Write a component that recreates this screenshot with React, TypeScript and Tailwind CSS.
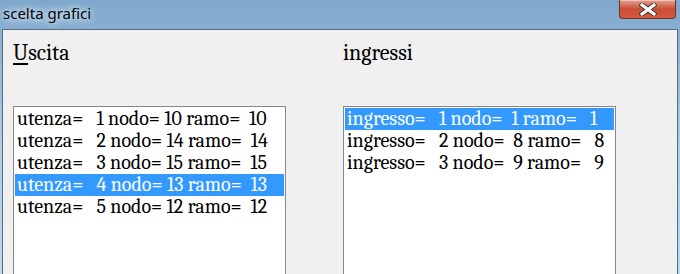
const uscite = [
  { n: 1, nodo: 10, ramo: 10 },
  { n: 2, nodo: 14, ramo: 14 },
  { n: 3, nodo: 15, ramo: 15 },
  { n: 4, nodo: 13, ramo: 13 },
  { n: 5, nodo: 12, ramo: 12 },
];

const ingressi = [
  { n: 1, nodo: 1, ramo: 1 },
  { n: 2, nodo: 8, ramo: 8 },
  { n: 3, nodo: 9, ramo: 9 },
];

function pad(v: number, w: number) {
  return String(v).padStart(w, " ");
}

function ListBox({ rows, selected }: { rows: string[]; selected: number }) {
  return (
    <div className="w-[273px] h-[200px] border border-[#828790] bg-white p-[1px]">
      {rows.map((r, i) => (
        <div
          key={i}
          className={`h-[22px] pl-[2px] leading-[22px] whitespace-pre text-[20px] font-serif ${
            i === selected ? "bg-[#3399ff] text-white" : "text-black"
          }`}
        >
          {r}
        </div>
      ))}
    </div>
  );
}

export default function App() {
  const left = uscite.map((u) => `utenza=${pad(u.n, 4)} nodo=${pad(u.nodo, 3)} ramo=${pad(u.ramo, 4)}`);
  const right = ingressi.map((u) => `ingresso=${pad(u.n, 4)} nodo=${pad(u.nodo, 3)} ramo=${pad(u.ramo, 4)}`);

  return (
    <div className="w-[680px] h-[274px] overflow-hidden flex flex-col bg-gradient-to-b from-[#7fa7cc] via-[#a8cdec] to-[#b8dbf4]">
      {/* title bar */}
      <div className="h-[29px] flex items-start justify-between shrink-0">
        <div className="pl-[3px] pt-[4px] text-[15px] leading-[18px] text-black font-sans [text-shadow:0_0_6px_#e6f3fd,0_0_10px_#e6f3fd]">
          scelta grafici
        </div>
        <div className="mr-[4px] w-[57px] h-[19px] rounded-b-[4px] border border-t-0 border-[#6e3028] bg-gradient-to-b from-[#e3a091] via-[#c94d35] to-[#d65a3c] flex items-center justify-center shadow-[inset_0_1px_0_rgba(255,255,255,0.4)]">
          <svg width="18" height="13" viewBox="0 0 18 13">
            <path d="M3 2 L15 11 M15 2 L3 11" stroke="#4a3a3a" strokeWidth="5" strokeLinecap="square" />
            <path d="M3 2 L15 11 M15 2 L3 11" stroke="#ffffff" strokeWidth="3" strokeLinecap="square" />
          </svg>
        </div>
      </div>

      {/* client area */}
      <div className="flex-1 mx-[2px] border-l border-t border-r border-[#5d6a7a] bg-[#f0f0f0] pl-[10px] pt-[10px] font-serif">
        <div className="grid grid-cols-[330px_1fr]">
          <div className="flex flex-col">
            <div className="text-[22px] leading-[26px] text-black font-serif">
              <span className="underline underline-offset-[3px]">U</span>scita
            </div>
            <div className="mt-[40px]">
              <ListBox rows={left} selected={3} />
            </div>
          </div>
          <div className="flex flex-col">
            <div className="text-[22px] leading-[26px] text-black font-serif">ingressi</div>
            <div className="mt-[40px]">
              <ListBox rows={right} selected={0} />
            </div>
          </div>
        </div>
      </div>
    </div>
  );
}
